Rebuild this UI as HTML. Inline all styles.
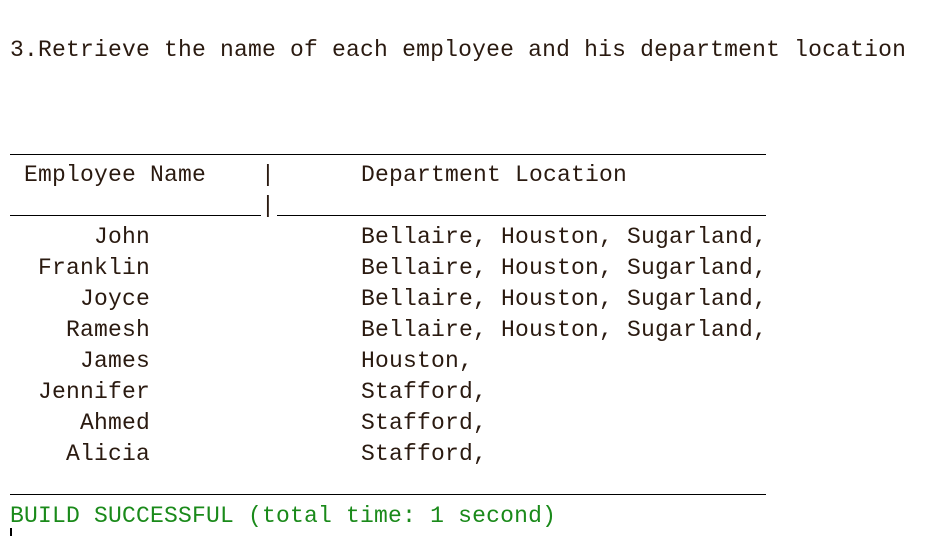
<!DOCTYPE html>
<html><head><style>
html,body{margin:0;padding:0;width:946px;height:536px;background:#fff;overflow:hidden}
body{position:relative;font-family:"Liberation Mono","Courier New",monospace;font-size:23px;color:#2a1a10;letter-spacing:0.2px}
.t{position:absolute;white-space:pre;line-height:31px}
.l{position:absolute;height:1px;background:#000}
.n{position:absolute;right:796px;white-space:pre;line-height:31px;text-align:right}
</style></head><body>
<div class="t" style="left:10px;top:35px">3.Retrieve the name of each employee and his department location</div>
<div class="l" style="left:10px;top:154px;width:756px"></div>
<div class="t" style="left:24px;top:160px">Employee Name</div>
<div class="t" style="left:261px;top:160px">|</div>
<div class="t" style="left:361px;top:160px">Department Location</div>
<div class="l" style="left:10px;top:215px;width:251px"></div>
<div class="t" style="left:261px;top:191px">|</div>
<div class="l" style="left:277px;top:215px;width:489px"></div>
<div class="n" style="top:222px">John</div><div class="t" style="left:361px;top:222px">Bellaire, Houston, Sugarland,</div>
<div class="n" style="top:253px">Franklin</div><div class="t" style="left:361px;top:253px">Bellaire, Houston, Sugarland,</div>
<div class="n" style="top:284px">Joyce</div><div class="t" style="left:361px;top:284px">Bellaire, Houston, Sugarland,</div>
<div class="n" style="top:315px">Ramesh</div><div class="t" style="left:361px;top:315px">Bellaire, Houston, Sugarland,</div>
<div class="n" style="top:346px">James</div><div class="t" style="left:361px;top:346px">Houston,</div>
<div class="n" style="top:377px">Jennifer</div><div class="t" style="left:361px;top:377px">Stafford,</div>
<div class="n" style="top:408px">Ahmed</div><div class="t" style="left:361px;top:408px">Stafford,</div>
<div class="n" style="top:439px">Alicia</div><div class="t" style="left:361px;top:439px">Stafford,</div>
<div class="l" style="left:10px;top:494px;width:756px"></div>
<div class="t" style="left:10px;top:501px;color:#1a8a1a">BUILD SUCCESSFUL (total time: 1 second)</div>
<div class="l" style="left:10px;top:528px;width:2px;height:8px"></div>
</body></html>
